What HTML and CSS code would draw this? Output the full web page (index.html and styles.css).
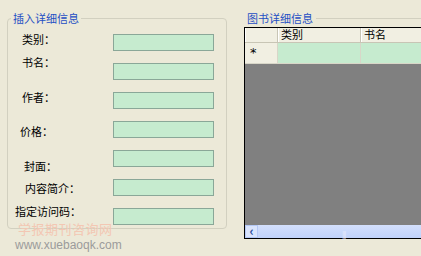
FILE: index.html
```html
<!DOCTYPE html>
<html lang="zh-CN">
<head>
  <meta charset="UTF-8">
  <title>图书信息</title>
  <link rel="stylesheet" href="styles.css">
</head>
<body>
<div class="page">
  <fieldset class="group insert">
    <legend>插入详细信息</legend>
    <div class="form">
      <div class="labels">
        <span class="lbl">类别：</span>
        <span class="lbl">书名：</span>
        <span class="lbl">作者：</span>
        <span class="lbl">价格：</span>
        <span class="lbl">封面：</span>
        <span class="lbl">内容简介：</span>
        <span class="lbl">指定访问码：</span>
      </div>
      <div class="fields">
        <div class="box"></div>
        <div class="box"></div>
        <div class="box"></div>
        <div class="box"></div>
        <div class="box"></div>
        <div class="box"></div>
        <div class="box"></div>
      </div>
    </div>
  </fieldset>

  <div class="detail">
    <div class="detail-title"><span>图书详细信息</span></div>
    <div class="grid">
      <div class="row head">
        <div class="cell rh"></div>
        <div class="cell c1">类别</div>
        <div class="cell c2">书名</div>
      </div>
      <div class="row new">
        <div class="cell rh">*</div>
        <div class="cell c1"></div>
        <div class="cell c2"></div>
      </div>
      <div class="empty"></div>
      <div class="hscroll">
        <div class="sbtn">&lsaquo;</div>
        <div class="track"><span class="grip">|||</span></div>
      </div>
    </div>
  </div>

  <div class="mark">
    <div class="mark-cn">学报期刊咨询网</div>
    <div class="mark-url">www.xuebaoqk.com</div>
  </div>
</div>
</body>
</html>
```

FILE: styles.css
```css
body {
  margin: 0;
  background: #ece9d8;
  font-family: "Noto Sans CJK SC", "DejaVu Sans", sans-serif;
  font-size: 11px;
  color: #000;
  overflow: hidden;
}
.page {
  position: relative;
  width: 421px;
  height: 256px;
  display: flex;
  overflow: hidden;
}
.group {
  flex: none;
  margin: 11px 0 0 7px;
  padding: 0;
  width: 218px;
  height: 216px;
  border: 1px solid #d2d0c0;
  border-radius: 4px;
  box-sizing: content-box;
}
.group legend {
  margin-left: 3px;
  padding: 0 2px;
  font-size: 11px;
  line-height: 14px;
  height: 14px;
  color: #1f4fc4;
}
.form {
  display: flex;
}
.labels {
  width: 105px;
  display: flex;
  flex-direction: column;
}
.lbl {
  line-height: 12px;
  height: 12px;
  padding-left: 14px;
  white-space: nowrap;
}
.lbl:nth-child(1) { margin-top: 8px; }
.lbl:nth-child(2) { margin-top: 11px; }
.lbl:nth-child(3) { margin-top: 23px; }
.lbl:nth-child(4) { margin-top: 22px; padding-left: 12px; }
.lbl:nth-child(5) { margin-top: 23px; padding-left: 16px; }
.lbl:nth-child(6) { margin-top: 10px; padding-left: 17px; }
.lbl:nth-child(7) { margin-top: 11px; padding-left: 7px; }
.fields {
  display: flex;
  flex-direction: column;
  gap: 12px;
  padding-top: 9px;
}
.box {
  width: 99px;
  height: 15px;
  background: #c6ebcf;
  border: 1px solid #8aa798;
}

.detail {
  flex: none;
  margin-left: 17px;
  width: 200px;
}
.detail-title {
  display: flex;
  align-items: center;
  height: 14px;
  margin-top: 11px;
  padding-left: 3px;
}
.detail-title span {
  color: #1f4fc4;
  padding-right: 3px;
  line-height: 14px;
}
.detail-title::after {
  content: "";
  flex: 1;
  border-top: 1px solid #d2d0c0;
}
.grid {
  margin-top: 2px;
  width: 240px;
  border: 1px solid #000;
  background: #808080;
}
.row {
  display: flex;
}
.cell {
  box-sizing: border-box;
  border-right: 1px solid #c8c5b5;
  border-bottom: 1px solid #c8c5b5;
  padding-left: 3px;
}
.rh { width: 33px; }
.c1 { width: 83px; }
.c2 { flex: 1; }
.head .cell {
  height: 15px;
  line-height: 13px;
  background: #f1efe2;
  box-shadow: inset 1px 0 #fff;
}
.new .cell {
  height: 21px;
  line-height: 20px;
  background: #c6ebcf;
  border-color: #d8d6c8;
}
.new .rh {
  background: #f1efe2;
  padding-left: 5px;
  font-family: "DejaVu Sans", sans-serif;
  font-size: 13px;
}
.empty {
  height: 161px;
}
.hscroll {
  display: flex;
  height: 13px;
  background: #c3d4fb;
}
.sbtn {
  width: 13px;
  background: #d9e4fd;
  border: 1px solid #b4c8f6;
  box-sizing: border-box;
  color: #2a4b9a;
  font-size: 13px;
  font-weight: bold;
  line-height: 10px;
  text-align: center;
}
.track {
  flex: 1;
  background: linear-gradient(#d3dffc, #c0d2fa);
}
.grip {
  display: inline-block;
  margin-left: 84px;
  color: #e8eefc;
  font-size: 8px;
  line-height: 13px;
  letter-spacing: -1px;
}

.mark {
  position: absolute;
  left: 18px;
  top: 220px;
  pointer-events: none;
}
.mark-cn {
  font-size: 13px;
  line-height: 18px;
  color: #f3c7b3;
  letter-spacing: 0.5px;
}
.mark-url {
  font-family: "Liberation Sans", sans-serif;
  font-size: 12px;
  line-height: 14px;
  color: #9b9b9b;
  margin-left: -3px;
}
```
